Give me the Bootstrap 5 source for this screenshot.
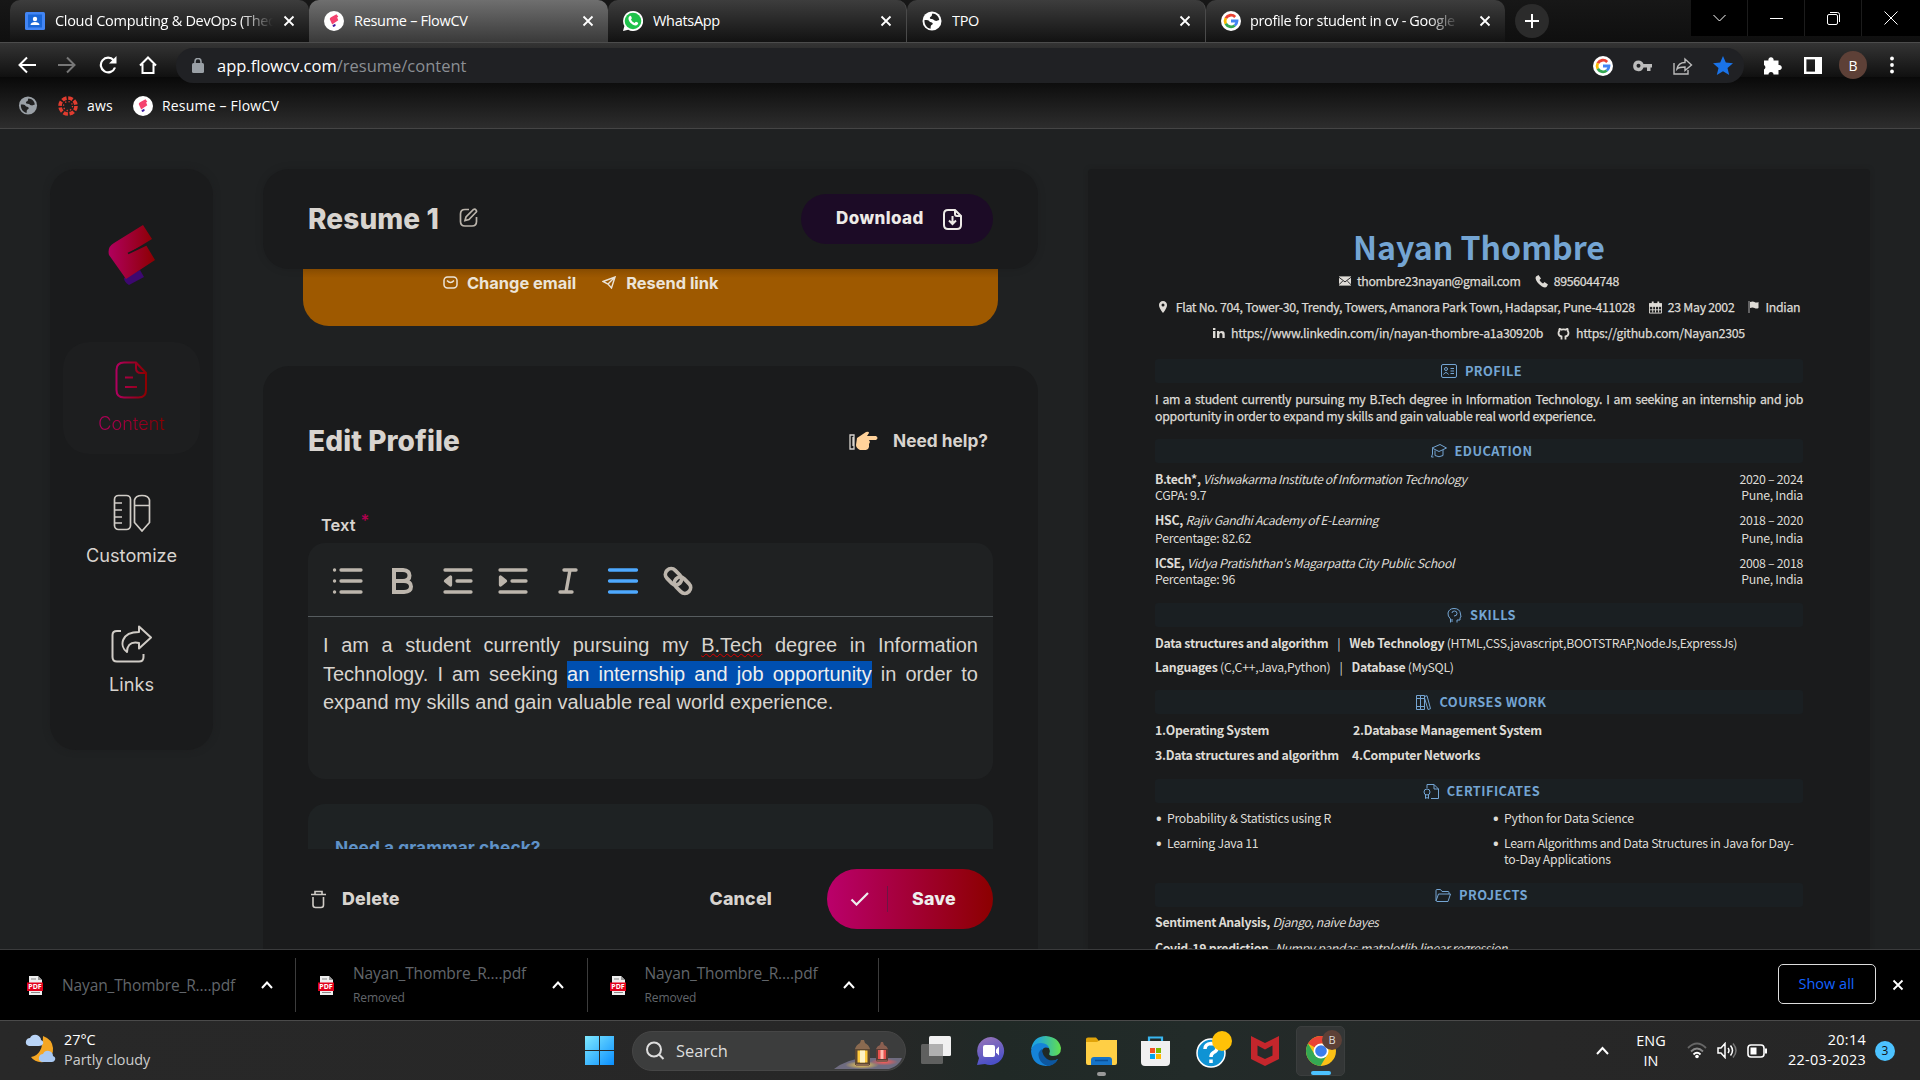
<!DOCTYPE html>
<html lang="en">
<head>
<meta charset="utf-8">
<title>Resume – FlowCV</title>
<link href="https://cdn.jsdelivr.net/npm/bootstrap@5.3.0/dist/css/bootstrap.min.css" rel="stylesheet">
<style>
:root{--page:#1f2122;--panel:#1a1b1c;--ink:#d8d4cf;--blue:#74a5d3}
html,body{width:1920px;height:1080px;overflow:hidden}
body{background:var(--page);font-family:"Open Sans","Noto Sans",sans-serif;color:#fff}
svg{display:block;flex:none}
.strip{height:42px;background:linear-gradient(#171717,#0f0f0f);padding-left:10px}
.tab{width:299px;height:42px;padding:0 14px 1px 15px;border-radius:10px 10px 0 0;background:linear-gradient(#3d3d3d,#121212);font-size:14.5px;letter-spacing:-.3px;white-space:nowrap}
.tab.on{background:linear-gradient(#6f6f6f,#3a3a3a)}
.tab.ruled{border-right:1px solid #4a4a4a}
.tab span{overflow:hidden;margin:0 10px 0 10px;flex:1}
.tab.fade-end span{-webkit-mask-image:linear-gradient(90deg,#000 85%,transparent)}
.tab.query span{letter-spacing:-.36px;margin:0 20px 0 9px}
.plus{width:34px;height:34px;border-radius:50%;background:#2b2b2b;margin:4px 0 0 10px}
.winctl{width:229px;height:36px;background:#000}
.winctl>div{width:57px;border-right:1px solid #1c1c1c}
.toolbar{height:35px;background:linear-gradient(#343434,#101010);border-top:1px solid #4c4c4c;position:relative;z-index:1}
.navset{width:176px;padding:10px 0 0 17px;gap:20.3px}
.address{width:1568px;height:35px;border-radius:17px;background:#202124;margin-top:5px;font-size:16.5px}
.marks{height:52px;background:linear-gradient(#090909,#2d2d2d);border-bottom:1px solid #454545;font-size:14px;letter-spacing:.2px;padding:6px 0 0 18px}
.avatar{width:28px;height:28px;border-radius:50%;background:#5d4037;font-size:14px}
.workspace{height:820px;overflow:hidden}
.ui{font-family:Inter,sans-serif;color:var(--ink)}
.side{width:163px;height:581px;margin:40px 0 0 50px;border-radius:26px;background:var(--panel);box-shadow:0 0 6px #1d1e1f;font-size:18.2px}
.side .tile{width:137px;height:112px;border-radius:26px}
.side .tile.on{background:#1d1e1f}
.grad{background:linear-gradient(90deg,#b0005e,#8a0000);-webkit-background-clip:text;color:transparent;font-weight:300}
.editor{width:775px;margin:40px 0 0 50px}
.head{height:100px;border-radius:26px;background:var(--panel);padding:0 45px;position:relative;z-index:1;box-shadow:0 0 9px rgba(0,0,0,.12)}
.big{font-size:28px;font-weight:800;letter-spacing:.1px}
.dl{width:192px;height:50px;border-radius:25px;background:#1c0b26;color:#edeae6;font-weight:800;font-size:17px;letter-spacing:.4px;padding:0 31px 0 35px}
.notice{width:695px;height:57px;margin:0 40px;border-radius:0 0 26px 26px;background:linear-gradient(#8f5000,#9e5900 9px);color:#ece4d8;font-weight:700;font-size:16.4px;padding:2px 0 0 140px}
.panel{height:583px;margin-top:40px;border-radius:26px 26px 0 0;background:var(--panel);padding:0 45px}
.b17{font-size:17.3px;font-weight:700}
.b18{font-size:17.8px;font-weight:800;letter-spacing:.2px}
.fieldname{margin:51px 0 0 13px;font-size:16.5px;font-weight:600;height:30px}
.box{height:236px;border-radius:17px;background:#1f2122}
.tools{height:74px;border-bottom:1px solid #565c5f;padding:2px 0 0 24px}
.prose{font:20px/28.6px "Liberation Sans",sans-serif;text-align:justify;padding:14px 15px 0;margin:0}
.picked{background:#004fb0;color:#eee;padding:2px 0 3px}
.spell{text-decoration:underline wavy #d00 1px;text-underline-offset:1px}
.grammar{height:45px;margin-top:25px;border-radius:17px 17px 0 0;background:#1e2223;overflow:hidden;padding:31px 27px 0;color:#5f92c8;letter-spacing:.05px}
.foot{height:100px}
.save{width:166px;height:60px;border-radius:30px;background:linear-gradient(90deg,#ba006b,#8c0000);color:#eee}
.save i{width:1px;height:26px;background:#6d1544}
.paper{width:782px;height:780px;margin:40px 0 0 50px;padding:0 67px;background:var(--panel);border-radius:4px 4px 0 0;font:12.3px/16px "Noto Sans CJK SC",sans-serif;letter-spacing:-.28px;color:#dedbd6;box-shadow:0 0 4px #1d1e1f;white-space:nowrap}
.paper i{letter-spacing:-.4px}
.paper h1{font-size:32.1px;font-weight:700;line-height:48px;color:var(--blue);margin:53px 0 0;letter-spacing:0}
.paper h2{height:24px;background:#1a1f22;color:var(--blue);font-size:12.8px;font-weight:700;line-height:24px;letter-spacing:.45px;margin:0;border-radius:3px;gap:8px;padding-left:5px}
.contact{height:16px;gap:6px}
.contact,.summary{-webkit-text-stroke:.25px #dedbd6}
.summary{text-align:justify;line-height:17px;letter-spacing:-.25px;margin:8px 0 0}
.dot{width:12px;padding-left:1px;font:700 15px/16px "Open Sans",sans-serif}
.bar{margin:0 6.500px}
.half{width:337px}
.dlbar{height:71px;background:#000;border-top:1px solid #3a3b3c}
.dlitem{width:291.5px;height:54px;border-right:1px solid #3c3c3c;color:#62666b;font-size:15.5px;letter-spacing:-.13px;line-height:24px;padding-left:22px}
.dlitem .note{font-size:12px;letter-spacing:-.1px;padding-top:1px}
.showall{width:98px;height:40px;border:1px solid #ddd;border-radius:5px;color:#1463ff;font-size:14.5px;margin-bottom:2px;padding-right:1px}
.taskbar{height:60px;border-top:1px solid #4a4a4a;background:linear-gradient(90deg,#282828 0,#272727 45%,#202926 52%,#222b29 62%,#272727 80%,#262626);font-size:14.4px;line-height:20px}
.lift{margin-bottom:2px}
.clock{width:85px;margin-left:13px;letter-spacing:.3px}
.search{width:274px;height:40px;border-radius:20px;background:#3c3d3d;overflow:hidden;border:1px solid #464646;margin-left:18px;font-size:16.4px}
.chrome-tile{width:49px;height:50px;border-radius:5px;background:#333636;border:1px solid #3b3e3e;position:relative}
.under{position:absolute;bottom:1px;height:4px;border-radius:2px}
.count{width:20px;height:20px;margin-left:9px;background:#4cc2ff;color:#111;font-size:12px}
</style>
</head>
<body class="d-flex flex-column">
<svg width="0" height="0" class="position-absolute">
<defs>
<linearGradient id="g1"><stop stop-color="#b0005e"/><stop offset="1" stop-color="#8c0000"/></linearGradient>
<symbol id="x" viewBox="0 0 12 12"><path d="M1.500 1.500l9 9M10.500 1.500l-9 9" stroke="#fff" stroke-width="1.800"/></symbol>
<symbol id="flow" viewBox="0 0 20 20"><circle cx="10" cy="10" r="10" fill="#fff"/><path d="M5.800 8.200Q5.500 7 7 6.200L12.500 3.200l1.800 2.600-1.200.8 1.200 2.600-4.800 3.200-1.300 1z" fill="#f5436f"/><path d="M8.500 14.300l2.700-1.500.5 2-2 1.200q-1-.3-1.200-1.700z" fill="#3c1a9e"/></symbol>
<symbol id="globe" viewBox="0 0 20 20"><circle cx="10" cy="10" r="9.500" fill="currentColor"/><path d="M2.500 9c3 0 4.500.3 5 1.500.4 1 3 .6 3.300 2 .2 1.300-1.800 1.300-2 2.500l-.3 2.800C4.500 17 2.200 13.500 2.500 9zM10.500 2.500c3.500 0 6.500 3 6.700 6.500-1.500.5-2.300 1.300-4 .8-1.700-.6-1.500-1.800-3.700-1.700-2 .1-2.200-2-.5-2.600 1.300-.4.500-2 1.500-3z" fill="#222"/></symbol>
<symbol id="goog" viewBox="0 0 20 20"><circle cx="10" cy="10" r="10" fill="#fff"/><g fill="none" stroke-width="2.800"><path d="M14.200 5.900A6 6 0 0 0 4.800 7.200" stroke="#ea4335"/><path d="M4.800 7.200a6 6 0 0 0 0 5.600" stroke="#fbbc05"/><path d="M4.800 12.800a6 6 0 0 0 9 1.700" stroke="#34a853"/><path d="M13.800 14.500A6 6 0 0 0 16 10h-6" stroke="#4285f4"/></g></symbol>
<symbol id="pdf" viewBox="0 0 16 19"><path d="M2 0h9l4 4v15H2z" fill="#eee"/><path d="M11 0l4 4h-4z" fill="#999"/><path d="M4 3h5M4 16.500h9" stroke="#888"/><rect y="6.500" width="16" height="8.500" fill="#e3001b"/><text x="8" y="13.200" font-size="7" font-weight="700" fill="#fff" text-anchor="middle" font-family="Open Sans" letter-spacing="0">PDF</text></symbol>
<symbol id="up" viewBox="0 0 12 8"><path d="M1 7l5-5.500L11 7" fill="none" stroke="#fff" stroke-width="2"/></symbol>
</defs>
</svg>

<div class="strip d-flex">
 <div class="tab fade-end d-flex align-items-center"><svg width="20" height="18" viewBox="0 0 20 18"><rect width="20" height="18" rx="1.500" fill="#4285f4"/><rect x="3" y="2.500" width="14" height="13" fill="#1a66d6"/><circle cx="10" cy="7" r="2.200" fill="#fff"/><path d="M5.500 13c0-4 9-4 9 0z" fill="#fff"/></svg><span>Cloud Computing &amp; DevOps (Theory)</span><svg width="12" height="12"><use href="#x"/></svg></div>
 <div class="tab on d-flex align-items-center"><svg width="20" height="20"><use href="#flow"/></svg><span>Resume – FlowCV</span><svg width="12" height="12"><use href="#x"/></svg></div>
 <div class="tab ruled d-flex align-items-center"><svg width="20" height="20" viewBox="0 0 20 20"><path d="M10 0a10 10 0 1 1-4.800 18.700L0 20l1.400-5A10 10 0 0 1 10 0z" fill="#fff"/><circle cx="10" cy="10" r="8.300" fill="#1fc24b"/><path d="M6.500 5.200c1-.8 1.700-.2 2.300 1.900.1.700-.9 1.200-.7 1.600.8 1.500 1.800 2.500 3.400 3.200.6 0 1-1.300 1.600-1.100l2 1c.4 1.500-1 2.600-2.500 2.600-3.500-.3-7.500-4.200-7.100-7.500.1-.7.500-1.200 1-1.700z" fill="#fff"/></svg><span>WhatsApp</span><svg width="12" height="12"><use href="#x"/></svg></div>
 <div class="tab ruled d-flex align-items-center"><svg width="20" height="20"><use href="#globe"/></svg><span>TPO</span><svg width="12" height="12"><use href="#x"/></svg></div>
 <div class="tab fade-end query d-flex align-items-center"><svg width="20" height="20"><use href="#goog"/></svg><span>profile for student in cv - Google Search</span><svg width="12" height="12"><use href="#x"/></svg></div>
 <div class="plus d-flex align-items-center justify-content-center"><svg width="16" height="16"><path d="M8 1v14M1 8h14" stroke="#fff" stroke-width="2"/></svg></div>
 <div class="winctl ms-auto d-flex">
  <div class="d-flex align-items-center justify-content-center"><svg width="13" height="8"><path d="M.5 1l6 6 6-6" fill="none" stroke="#fff"/></svg></div>
  <div class="d-flex align-items-center justify-content-center"><svg width="13" height="3"><path d="M0 1.500h13" stroke="#fff"/></svg></div>
  <div class="d-flex align-items-center justify-content-center"><svg width="13" height="13"><rect x=".5" y="2.500" width="10" height="10" rx="1.500" fill="none" stroke="#fff"/><path d="M3 .5h7.500a2 2 0 0 1 2 2V10" fill="none" stroke="#fff"/></svg></div>
  <div class="d-flex align-items-center justify-content-center border-0"><svg width="14" height="14"><path d="M.5.500l13 13M13.500.500l-13 13" stroke="#fff"/></svg></div>
 </div>
</div>

<div class="toolbar d-flex">
 <div class="navset d-flex align-items-center">
  <svg width="20" height="18" viewBox="0 0 20 18" fill="none" stroke="#fff" stroke-width="2"><path d="M19 9H3M10 1.500L2.500 9l7.500 7.500"/></svg>
  <svg width="20" height="18" viewBox="0 0 20 18" fill="none" stroke="#777" stroke-width="2"><path d="M1 9h16M10 1.500L17.500 9 10 16.500"/></svg>
  <svg width="20" height="18" viewBox="0 0 20 18" fill="none" stroke="#fff" stroke-width="2.200"><path d="M17 11.500a7.300 7.300 0 1 1-1.300-7.200"/><path d="M18.500 0v7.500H11z" fill="#fff" stroke="none"/></svg>
  <svg width="20" height="18" viewBox="0 0 20 18" fill="none" stroke="#fff" stroke-width="2"><path d="M2 9.500L10 1.500l8 8M4.500 8v9h11V8"/></svg>
 </div>
 <div class="address d-flex align-items-center">
  <svg class="ms-3" width="12" height="15" viewBox="0 0 12 15"><rect y="5" width="12" height="10" rx="1.500" fill="#9aa0a6"/><path d="M3 6V3.500a3 3 0 0 1 6 0V6" fill="none" stroke="#9aa0a6" stroke-width="1.600"/></svg>
  <div style="margin:2px 0 0 13px">app.flowcv.com<span style="color:#8b8f94">/resume/content</span></div>
  <div class="ms-auto d-flex align-items-center" style="gap:20px;margin-right:11px">
   <svg width="20" height="20"><use href="#goog"/></svg>
   <svg width="20" height="12" viewBox="0 0 20 12"><path d="M5.500.500a5.300 5.300 0 0 1 5 3.500H19v3.500h-1.500V11H14V7.500h-3.500A5.300 5.300 0 1 1 5.500.500zm0 3.300a2 2 0 1 0 0 4 2 2 0 0 0 0-4z" fill="#bbb" fill-rule="evenodd"/></svg>
   <svg width="20" height="18" viewBox="0 0 20 18" fill="none" stroke="#bbb" stroke-width="1.400"><path d="M1 6v11h14v-4"/><path d="M4 12c1-5 4-6.500 8-6.500V2l6.500 6-6.500 5.500V10c-3.500 0-6 0-8 2z"/></svg>
   <svg width="20" height="19" viewBox="0 0 20 19"><path d="M10 0l2.800 6.600 7.200.6-5.500 4.700L16.200 19 10 15.200 3.800 19l1.700-7.100L0 7.200l7.200-.6z" fill="#1a73e8"/></svg>
  </div>
 </div>
 <div class="d-flex align-items-center" style="padding:10px 0 0 19px;gap:21px;height:34px">
  <svg width="20" height="19" viewBox="0 0 20 19"><path d="M1 4.500h4.500a2.600 2.600 0 1 1 5 0H15.500V9a2.600 2.600 0 1 1 0 5V18.500h-5a2.500 2.500 0 0 0-5 0H1v-5a2.500 2.500 0 0 0 0-4.500z" fill="#fff"/></svg>
  <svg width="18" height="17"><rect x="1.200" y="1.200" width="15.600" height="14.600" fill="none" stroke="#fff" stroke-width="2.400"/><rect x="11" y="1" width="6" height="15" fill="#fff"/></svg>
  <div class="avatar d-flex align-items-center justify-content-center" style="margin-left:-4px">B</div>
  <svg width="6" height="18"><g fill="#fff"><circle cx="4" cy="2.500" r="1.900"/><circle cx="4" cy="9" r="1.900"/><circle cx="4" cy="15.500" r="1.900"/></g></svg>
 </div>
</div>

<div class="marks d-flex align-items-center">
 <svg width="20" height="19" style="color:#9aa0a6"><use href="#globe"/></svg>
 <svg width="20" height="20" viewBox="0 0 20 20" style="margin:0 9px 0 20px"><circle cx="10" cy="10" r="8" fill="none" stroke="#e13c2f" stroke-width="3.600" stroke-dasharray="4.600 1.680"/><circle cx="10" cy="10" r="4.500" fill="none" stroke="#e13c2f" stroke-width="1.300" stroke-dasharray="1.300 2.230"/></svg>
 <span>aws</span>
 <svg width="20" height="20" style="margin:0 9px 0 20px"><use href="#flow"/></svg><span>Resume – FlowCV</span>
</div>

<div class="workspace d-flex">
 <div class="side ui d-flex flex-column align-items-center">
  <svg width="50" height="62" viewBox="0 0 50 62" style="margin-top:55px"><path d="M17 54l16-8 4 7-15 8q-5-3-5-7z" fill="#3d0870"/><path d="M7 19L36 1l9 14L22 29l17-8 9 15-29 19L2 31Q0 23 7 19z" fill="url(#g1)"/><path d="M21 29.500L40 20.500" stroke="#1a1b1c" stroke-width="1.800"/></svg>
  <div class="tile on d-flex flex-column align-items-center" style="margin-top:56px;padding-top:19px">
   <svg width="33" height="38" viewBox="0 0 33 38" fill="none" stroke="url(#g1)" stroke-width="2"><path d="M21 1.500H9Q1.500 1.500 1.500 9v20q0 7.500 7.500 7.500h14.500q7.500 0 7.500-7.500V12zM21 1.500V7q0 5 5 5h5.500M10 16.600l8-.1M10 26.100l12-.1"/></svg>
   <div class="grad" style="margin-top:11px">Content</div></div>
  <div class="tile d-flex flex-column align-items-center" style="margin-top:22px;padding-top:18px">
   <svg width="38" height="38" viewBox="0 0 38 38" fill="none" stroke="#d0ccc6" stroke-width="1.700"><rect x="1.500" y="1.500" width="16" height="34" rx="4"/><path d="M2 9h7M2 16h7M2 23h7M2 29h7M21.500 6q1-4.500 7.500-4.500T36.500 6v22.500L29 37l-7.500-8.500zM21.500 11.500h15"/></svg>
   <div style="margin-top:10px">Customize</div></div>
  <div class="tile d-flex flex-column align-items-center" style="margin-top:20px;padding-top:17px">
   <svg width="41" height="38" viewBox="0 0 41 38" fill="none" stroke="#d0ccc6" stroke-width="2" stroke-linejoin="round"><path d="M10 6H6Q1.500 6 1.500 10v22q0 4.500 4.500 4.500h22q4.500 0 4.500-4.500v-3"/><path d="M28 7V1.500L40 12.500 28 23.500V18c-10-2-12 4-12 9-8-6-6-20 12-20z"/></svg>
   <div style="margin-top:8px">Links</div></div>
 </div>

 <div class="editor ui">
  <div class="head d-flex align-items-center">
   <span class="big">Resume 1</span>
   <svg width="19" height="19" viewBox="0 0 19 19" fill="none" stroke="#bab4ab" stroke-width="1.700" style="margin:-3px 0 0 20px"><path d="M10 1.500H6Q1.500 1.500 1.500 6v7.500Q1.500 18 6 18h7q4.500 0 4.500-4.500V9"/><path d="M6 12.500l1-3.500 7.500-7.500q1.500-.8 2.500.5t.2 2L10 11.500z"/></svg>
   <div class="dl ms-auto d-flex align-items-center"><span>Download</span><svg class="ms-auto" width="19" height="21" viewBox="0 0 19 21" fill="none" stroke="#edeae6" stroke-width="2"><path d="M12 1H5Q1 1 1 5v11q0 4 4 4h9q4 0 4-4V7zM12 1v4q0 2 2 2h4M9.500 7v8M6 11.500L9.500 15l3.500-3.500"/></svg></div>
  </div>
  <div class="notice d-flex align-items-start">
   <svg width="15" height="13" viewBox="0 0 15 13" fill="none" stroke="#ece4d8" stroke-width="1.500" style="margin:5px 9px 0 0"><rect x="1" y="1" width="13" height="11" rx="3.500"/><path d="M4 4.500q3.500 4 7 0"/></svg><span>Change email</span>
   <svg width="14" height="13" viewBox="0 0 14 13" fill="none" stroke="#ece4d8" stroke-width="1.400" style="margin:5px 10px 0 26px"><path d="M1 5.500L13 1 9.500 12 6 8zM6 8l7-7"/></svg><span>Resend link</span>
  </div>
  <div class="panel">
   <div class="d-flex align-items-center justify-content-between" style="padding-top:54px;height:96px">
    <span class="big">Edit Profile</span>
    <div class="b17 d-flex align-items-center" style="margin-right:5px;gap:15px"><svg width="29" height="20" viewBox="0 0 29 20"><path d="M1 4h4v14H1zM4 6v9" fill="none" stroke="#d8d4cf" stroke-width="1.300"/><path d="M8 7l9-6q3-1 3 1l-2 3h9q3 2 0 4h-7l1 2-1 2v3l-1 2-2 1H11q-4-2-4-5z" fill="#ffd29a"/></svg><span>Need help?</span></div>
   </div>
   <div class="fieldname d-flex"><span>Text</span><span style="color:#b0004e;margin:-5px 0 0 5px">*</span></div>
   <div class="box">
    <div class="tools d-flex align-items-center">
     <svg width="32" height="30" viewBox="0 0 32 30" stroke="#bdb6ad" stroke-width="3.300" stroke-linecap="round"><path d="M9 4h20M9 15h20M9 26h20M2.500 4h.1M2.500 15h.1M2.500 26h.1"/></svg>
     <svg width="24" height="30" viewBox="0 0 24 30" fill="none" stroke="#bdb6ad" stroke-width="4" style="margin-left:27px"><path d="M3 4h9q6.500.5 6.500 5.500T12 15H3h10q7 .5 7 5.500T13 26H3z"/></svg>
     <svg width="30" height="30" viewBox="0 0 30 30" stroke="#bdb6ad" stroke-width="3.300" stroke-linecap="round" style="margin-left:28px"><path d="M2 4h26M14 15h14M2 26h26"/><path d="M2.500 15l5-4v8z" fill="#bdb6ad" stroke-linejoin="round"/></svg>
     <svg width="30" height="30" viewBox="0 0 30 30" stroke="#bdb6ad" stroke-width="3.300" stroke-linecap="round" style="margin-left:25px"><path d="M2 4h26M14 15h14M2 26h26"/><path d="M7.500 15l-5-4v8z" fill="#bdb6ad" stroke-linejoin="round"/></svg>
     <svg width="22" height="30" viewBox="0 0 22 30" stroke="#bdb6ad" stroke-width="3.400" stroke-linecap="round" style="margin-left:29px"><path d="M7 4h12M3 26h12M13 4L9 26"/></svg>
     <svg width="32" height="30" viewBox="0 0 32 30" stroke="#4ea9ff" stroke-width="3.300" stroke-linecap="round" style="margin-left:28px"><path d="M2.500 4h27M2.500 15h27M2.500 26h27"/></svg>
     <svg width="30" height="30" viewBox="0 0 30 30" fill="none" stroke="#bdb6ad" stroke-width="3.800" style="margin-left:24px"><rect x="1.500" y="5" width="18" height="11.500" rx="5.700" transform="rotate(45 10.500 10.700)"/><rect x="10.500" y="13.500" width="18" height="11.500" rx="5.700" transform="rotate(45 19.500 19.300)"/></svg>
    </div>
    <p class="prose">I am a student currently pursuing my <span class="spell">B.Tech</span> degree in Information Technology. I am seeking <span class="picked">an internship and job opportunity</span> in order to expand my skills and gain valuable real world experience.</p>
   </div>
   <div class="grammar b17">Need a grammar check?</div>
   <div class="foot b18 d-flex align-items-center">
    <svg width="20" height="19" viewBox="0 0 20 19" fill="none" stroke="#d0ccc6" stroke-width="1.600"><path d="M3 4.500h15M7 4V1.500h7V4M5 7v8q0 2.500 2.500 2.500h5.500Q15.500 17.500 15.500 15V7"/></svg>
    <span style="margin-left:14px">Delete</span>
    <span class="ms-auto" style="margin-right:55px">Cancel</span>
    <div class="save d-flex align-items-center"><svg width="20" height="14" style="margin:0 17px 0 23px"><path d="M1.500 7.500l5 5L18 1" fill="none" stroke="#eee" stroke-width="2.200"/></svg><i></i><span style="margin-left:24px">Save</span></div>
   </div>
  </div>
 </div>

 <div class="paper d-flex flex-column">
  <h1 class="text-center">Nayan Thombre</h1>
  <div class="contact d-flex justify-content-center align-items-center" style="margin-top:3px"><svg width="12" height="10" viewBox="0 0 13 10"><rect width="13" height="10" fill="#dedbd6"/><path d="M0 1l6.500 5L13 1M0 9l4-4M13 9L9 5" stroke="#1a1b1c" fill="none"/></svg><span>thombre23nayan@gmail.com</span>
   <svg class="ms-2" width="13" height="13" viewBox="0 0 13 13"><path d="M1 1.500L3.500 0 6 3.500 4.500 5q1 2 3.500 3.500L9.500 7 13 9.500 11.500 12Q10 13 7 11.500 1 7.500.500 3z" fill="#dedbd6"/></svg><span>8956044748</span></div>
  <div class="contact d-flex justify-content-center align-items-center" style="margin-top:10px"><svg width="12" height="12"><path d="M5 0a4 4 0 0 1 4 4.200Q9 7 5 12 1 7 1 4.200A4 4 0 0 1 5 0zm0 2.600a1.500 1.500 0 1 0 0 3 1.500 1.500 0 0 0 0-3z" fill="#dedbd6" fill-rule="evenodd"/></svg><span>Flat No. 704, Tower-30, Trendy, Towers, Amanora Park Town, Hadapsar, Pune-411028</span>
   <svg class="ms-2" width="13" height="13" viewBox="0 0 14 13"><path d="M.5 2.500h13v10H.500zM.5 5.500h13M.5 9h13M4 3v9M7 3v9M10.300 3v9" fill="none" stroke="#dedbd6"/><path d="M0 2h14v3H0zM3 0h2v3H3zM9 0h2v3H9z" fill="#dedbd6"/></svg><span>23 May 2002</span>
   <svg class="ms-2" width="11" height="12"><path d="M1 0v12" stroke="#aaa"/><path d="M2 1q3-1 4.500 0t4 0v6q-2 1-4 0T2 7z" fill="#dedbd6"/></svg><span>Indian</span></div>
  <div class="contact d-flex justify-content-center align-items-center" style="margin-top:10px"><svg width="12" height="10"><path d="M0 3h2.400v7H0zM0 0h2.400v2H0zM4 3h2.300v1q2-1.800 4.500-.6.900.7.900 2.600v4H9.400V6.500Q9 4.500 7.500 5q-1.200.5-1.100 2v3H4z" fill="#dedbd6"/></svg><span>https://www.linkedin.com/in/nayan-thombre-a1a30920b</span>
   <svg class="ms-2" width="13" height="13" viewBox="0 0 13 13"><path d="M4.500 12.500v-3Q1.500 9 1.500 6q0-1.300.8-2-.2-1.500.2-2 1 0 2 .7 2-.5 4 0 1-.7 2-.7.400.8.2 2 .8.700.8 2 0 3-3 3.500v3" fill="none" stroke="#dedbd6" stroke-width="1.800"/></svg><span>https://github.com/Nayan2305</span></div>

  <h2 class="d-flex align-items-center justify-content-center" style="margin-top:18px"><svg width="16" height="14" fill="none" stroke="#74a5d3"><rect x=".5" y=".5" width="15" height="13" rx="1.500"/><circle cx="5" cy="5" r="1.500"/><path d="M2.500 10.500q2.500-4 5 0M9.500 4.500H13M9.500 7H13M9.500 9.500H13"/></svg>PROFILE</h2>
  <p class="summary text-wrap">I am a student currently pursuing my B.Tech degree in Information Technology. I am seeking an internship and job opportunity in order to expand my skills and gain valuable real world experience.</p>

  <h2 class="d-flex align-items-center justify-content-center" style="margin-top:14px"><svg width="16" height="14" fill="none" stroke="#74a5d3"><path d="M1 4l8-3.500L15.500 4 8 7.500zM4 6.500v5q4 2.500 8 0V6M1.500 4.500V10l-1 3h2"/></svg>EDUCATION</h2>
  <div class="d-flex justify-content-between" style="margin-top:8px"><span><b>B.tech*,</b> <i>Vishwakarma Institute of Information Technology</i></span><span>2020 – 2024</span></div>
  <div class="d-flex justify-content-between"><span>CGPA: 9.7</span><span>Pune, India</span></div>
  <div class="d-flex justify-content-between" style="margin-top:9px"><span><b>HSC,</b> <i>Rajiv Gandhi Academy of E-Learning</i></span><span>2018 – 2020</span></div>
  <div class="d-flex justify-content-between" style="margin-top:2px"><span>Percentage: 82.62</span><span>Pune, India</span></div>
  <div class="d-flex justify-content-between" style="margin-top:9px"><span><b>ICSE,</b> <i style="letter-spacing:-.33px">Vidya Pratishthan's Magarpatta City Public School</i></span><span>2008 – 2018</span></div>
  <div class="d-flex justify-content-between"><span>Percentage: 96</span><span>Pune, India</span></div>

  <h2 class="d-flex align-items-center justify-content-center" style="margin-top:16px"><svg width="15" height="15" fill="none" stroke="#74a5d3"><path d="M3.500 14.500V11Q.500 8 1 5q1-4.500 6-4.500 6 0 6.500 5.500L14 9l-1 .5v2.500h-3v2.500M5 14v-3M5 5q0-2 2.500-2T10 5.500 7 8"/></svg>SKILLS</h2>
  <div style="margin-top:8px"><b>Data structures and algorithm</b><span class="bar">&nbsp;|&nbsp;</span><b>Web Technology</b> (HTML,CSS,javascript,BOOTSTRAP,NodeJs,ExpressJs)</div>
  <div style="margin-top:8px"><b>Languages</b> (C,C++,Java,Python)<span class="bar">&nbsp;|&nbsp;</span><b>Database</b> (MySQL)</div>

  <h2 class="d-flex align-items-center justify-content-center" style="margin-top:15px"><svg width="15" height="15" fill="none" stroke="#74a5d3"><path d="M.5.500h4v14h-4zM4.500.500h4v14h-4zM.5 3.500h8M.5 11.500h8M8.500 1.500l2.500-.8 3.500 13-2.500.8L8.500 3"/></svg>COURSES WORK</h2>
  <div class="d-flex fw-bold" style="margin-top:8px"><span style="width:198px">1.Operating System</span><span>2.Database Management System</span></div>
  <div class="d-flex fw-bold" style="margin-top:9px"><span style="width:197px">3.Data structures and algorithm</span><span>4.Computer Networks</span></div>

  <h2 class="d-flex align-items-center justify-content-center" style="margin-top:16px"><svg width="16" height="15" fill="none" stroke="#74a5d3"><path d="M4 4V.500h7l4.500 4.500v9.500H8M11 .500V5h4.500"/><circle cx="4" cy="8" r="3"/><path d="M2.500 10.500v4l1.500-1 1.500 1v-4"/></svg>CERTIFICATES</h2>
  <div class="d-flex" style="margin-top:7px"><div class="half d-flex"><span class="dot">•</span>Probability &amp; Statistics using R</div><div class="d-flex"><span class="dot">•</span>Python for Data Science</div></div>
  <div class="d-flex" style="margin-top:9px"><div class="half d-flex"><span class="dot">•</span>Learning Java 11</div><div class="d-flex"><span class="dot">•</span><span>Learn Algorithms and Data Structures in Java for Day-<br>to-Day Applications</span></div></div>

  <h2 class="d-flex align-items-center justify-content-center" style="margin-top:16px"><svg width="16" height="13" fill="none" stroke="#74a5d3"><path d="M1 12V1.500Q1 .500 2 .500h3.500L7 2.500h6q1 0 1 1V5M1 12l2.500-7h12L13 12.500H1.500"/></svg>PROJECTS</h2>
  <div style="margin-top:7px"><b>Sentiment Analysis,</b> <i>Django, naive bayes</i></div>
  <div style="margin-top:10px"><b>Covid-19 prediction,</b> <i>Numpy,pandas,matplotlib,linear regression</i></div>
 </div>
</div>

<div class="dlbar d-flex align-items-center">
 <div class="dlitem d-flex align-items-center" style="padding-left:27px;width:296px"><svg width="16" height="19"><use href="#pdf"/></svg><span style="margin-left:19px">Nayan_Thombre_R....pdf</span><svg class="ms-auto" width="12" height="8" style="margin-right:22px"><use href="#up"/></svg></div>
 <div class="dlitem d-flex align-items-center"><svg width="16" height="19"><use href="#pdf"/></svg><div style="margin-left:19px">Nayan_Thombre_R....pdf<div class="note">Removed</div></div><svg class="ms-auto" width="12" height="8" style="margin-right:23px"><use href="#up"/></svg></div>
 <div class="dlitem d-flex align-items-center"><svg width="16" height="19"><use href="#pdf"/></svg><div style="margin-left:19px">Nayan_Thombre_R....pdf<div class="note">Removed</div></div><svg class="ms-auto" width="12" height="8" style="margin-right:23px"><use href="#up"/></svg></div>
 <div class="showall ms-auto d-flex align-items-center justify-content-center">Show all</div>
 <svg width="12" height="12" style="margin:0 16px"><use href="#x"/></svg>
</div>

<div class="taskbar d-flex align-items-center">
 <svg width="31" height="30" viewBox="0 0 31 30" style="margin:-4px 0 0 25px"><path d="M18 2q9 3 10 12T19 28q-9 1-13-5 12-2 12-21z" fill="#f5a623"/><path d="M4 12q-4-1-3-5 1-3 4-3 2-4 7-3 4 2 4 5 3 1 2 4-1 2-4 2z" fill="#b9d4f7"/><path d="M17 28q-4-1-3-5 1-3 4-3 2-4 6-3 4 1 4 5 3 1 2 4-1 2-3 2z" fill="#a9c8f2"/></svg>
 <div class="lift" style="width:521px;margin-left:8px">27°C<br><span style="color:#ccc">Partly cloudy</span></div>
 <svg width="29" height="29" viewBox="0 0 29 29"><linearGradient id="w" x2="1" y2="1"><stop stop-color="#7fe9ff"/><stop offset="1" stop-color="#0a8fff"/></linearGradient><path d="M0 0h14v14H0zM15 0h14v14H15zM0 15h14v14H0zM15 15h14v14H15z" fill="url(#w)"/></svg>
 <div class="search d-flex align-items-center"><svg width="19" height="20" style="margin:0 11px 0 13px" fill="none" stroke="#ddd" stroke-width="2"><circle cx="8" cy="8.500" r="7"/><path d="M13 13.500l4.500 4.500"/></svg><span style="color:#ddd">Search</span>
  <svg class="ms-auto" width="72" height="38" viewBox="0 0 72 38">
   <radialGradient id="y1"><stop stop-color="#ffd34d"/><stop offset="1" stop-color="#ffd34d" stop-opacity="0"/></radialGradient><radialGradient id="r1"><stop stop-color="#ff5a55"/><stop offset="1" stop-color="#ff5a55" stop-opacity="0"/></radialGradient>
   <path d="M1 37Q14 27 32 26h37q-3 8-13 11z" fill="#6f6c80"/><ellipse cx="29" cy="33" rx="17" ry="4" fill="url(#y1)"/><ellipse cx="51" cy="30" rx="14" ry="3.500" fill="url(#r1)"/>
   <path d="M28 8h3l1 3q4 2 5 6H22q1-4 5-6z" fill="#8a6a50"/><path d="M22 17h15v16H22z" fill="#5e4832"/><path d="M24.500 18.500h10v12h-10z" fill="#ffcb3d"/><path d="M27 18.500h5v12h-5z" fill="#fff3c4"/><path d="M23 32h13v2H23z" fill="#8a6a50"/>
   <path d="M48 10h2l1 3q3 1 4 4H43q1-3 4-4z" fill="#8a5f50"/><path d="M43 17h12v12H43z" fill="#5c3c34"/><path d="M45 18h8v9h-8z" fill="#e8514d"/><path d="M47.500 18h3v9h-3z" fill="#ffb9ae"/><path d="M43.500 28h11v2h-11z" fill="#85594c"/></svg></div>
 <svg width="31" height="29" viewBox="0 0 31 29" style="margin-left:15px"><rect x="8" width="22" height="20" rx="1.500" fill="#f1f1f1"/><rect y="8" width="22" height="20" rx="1.500" fill="#666" opacity=".9"/><path d="M8 8h14v12H8z" fill="#b0b0b0"/></svg>
 <svg width="30" height="30" viewBox="0 0 30 30" style="margin-left:24px"><linearGradient id="t" y2="1" x2=".3"><stop stop-color="#9a76b8"/><stop offset="1" stop-color="#4b50c8"/></linearGradient><path d="M15 1a14 14 0 1 1-6 27L1 29l2-7A14 14 0 0 1 15 1z" fill="url(#t)"/><rect x="7" y="9" width="12" height="12" rx="2" fill="#fff"/><path d="M20 13.500l3-3v9l-3-3z" fill="#fff"/></svg>
 <svg width="30" height="30" viewBox="0 0 30 30" style="margin-left:25px"><linearGradient id="e"><stop offset=".2" stop-color="#1fa5dc"/><stop offset="1" stop-color="#63e04c"/></linearGradient><path d="M0 14Q2 0 15 0q13 1 15 12 0 8-8 8-5-.5-3.500-3Q20 12 14 9 4 7 0 14z" fill="url(#e)"/><path d="M0 15q2-8 10-8 7 .5 8 5-6-2-7 3-1 9 8 10 5 0 8-2-4 7-12 7Q1 29 0 15z" fill="#1583d8"/><path d="M11 13q-5 3-3 9 2 6 9 8 7-1 10-7-6 3-11 0-5-4-5-10z" fill="#0d57a0"/></svg>
 <div class="position-relative d-flex align-items-center" style="margin-left:25px;height:52px"><svg width="31" height="28" viewBox="0 0 31 28"><path d="M0 2q0-1.500 2-1.500h8L13 4h16q2 0 2 2v20H0z" fill="#e0a30a"/><path d="M0 5h11l3-2h17v23q0 2-2 2H2q-2 0-2-2z" fill="#ffcf45"/><path d="M5 28v-5q0-3 3-3h15q3 0 3 3v5z" fill="#1673c7"/><path d="M9 23.500h13" stroke="#0b4f96" stroke-width="1.500"/></svg><div class="under" style="left:11px;width:9px;background:#999"></div></div>
 <svg width="29" height="30" viewBox="0 0 29 30" style="margin-left:24px"><path d="M8 6V1.500h13V6" fill="none" stroke="#38b6ef" stroke-width="2.200"/><path d="M0 5h29v21q0 4-4 4H4q-4 0-4-4z" fill="#f0f0f0"/><path d="M9 12h5v5H9z" fill="#f25022"/><path d="M15 12h5v5h-5z" fill="#7fba00"/><path d="M9 18h5v5H9z" fill="#00a4ef"/><path d="M15 18h5v5h-5z" fill="#ffb900"/></svg>
 <svg width="37" height="40" viewBox="0 0 37 40" style="margin:-6px 0 0 25px"><circle cx="16" cy="25" r="14" fill="#0f93d4" stroke="#fff" stroke-width="1.500"/><path d="M10 21q0-5 6-5.500 6 .5 6 4.500 0 3-3.500 4.500Q16 26 16 29M16 31.500v3.500" stroke="#fff" stroke-width="3.500" fill="none"/><circle cx="27" cy="13" r="10" fill="#ffc107"/></svg>
 <svg width="28" height="30" viewBox="0 0 28 30" style="margin-left:19px"><path d="M0 0l14 7 14-7v23l-14 7-14-7z" fill="#c5262c"/><path d="M6.500 9.500L14 13.500l7.500-4v10L14 23l-7.500-3.500z" fill="#252b2a"/></svg>
 <div class="chrome-tile" style="margin-left:17px"><svg width="49" height="50" viewBox="0 0 49 50" style="margin:-1px"><circle cx="25" cy="25" r="15" fill="#fbc116"/><path d="M25 25L12 17.500A15 15 0 0 1 38 17.500H25z" fill="#ea4335"/><path d="M12 17.500a15 15 0 0 0 12.500 22.500L31 29H19z" fill="#34a853"/><circle cx="25" cy="25" r="7.500" fill="#fff"/><circle cx="25" cy="25" r="5.800" fill="#3b7ded"/><circle cx="36" cy="14" r="10" fill="#5d4037"/><text x="36" y="18" font-size="11" fill="#ddd" text-anchor="middle">B</text></svg><div class="under" style="left:14px;bottom:0;width:20px;background:#4cc2ff"></div></div>
 <svg width="13" height="9" style="margin-left:251px"><path d="M1 8l5.500-6L12 8" fill="none" stroke="#fff" stroke-width="2"/></svg>
 <div class="text-center" style="margin-left:25px;width:34px">ENG<br>IN</div>
 <svg width="20" height="17" viewBox="0 0 20 17" fill="none" stroke-width="1.800" style="margin-left:19px"><path d="M1 6q9-9 18 0" stroke="#666"/><path d="M4 9.500q6-6 12 0" stroke="#888"/><path d="M6.500 12.500q3.500-3.500 7 0" stroke="#fff"/><circle cx="10" cy="14.500" r="1.800" fill="#fff"/></svg>
 <svg width="20" height="17" viewBox="0 0 20 17" fill="none" stroke="#fff" stroke-width="1.500" style="margin-left:10px"><path d="M1 6v5h3l4 4.500V1.500L4 6zM11 6q2 2.500 0 5M13.500 3.500q4 5 0 10"/><path d="M16 1.500q6 7 0 14" stroke="#777"/></svg>
 <svg width="21" height="14" style="margin-left:10px"><rect x="1" y="1" width="16" height="12" rx="3" fill="none" stroke="#fff" stroke-width="1.600"/><rect x="3.500" y="3.500" width="6" height="7" fill="#fff"/><path d="M19 4.500v5" stroke="#fff" stroke-width="2"/></svg>
 <div class="clock lift text-end">20:14<br>22-03-2023</div>
 <div class="count d-flex align-items-center justify-content-center rounded-circle">3</div>
</div>
<script src="https://cdn.jsdelivr.net/npm/bootstrap@5.3.0/dist/js/bootstrap.bundle.min.js"></script>
</body>
</html>
